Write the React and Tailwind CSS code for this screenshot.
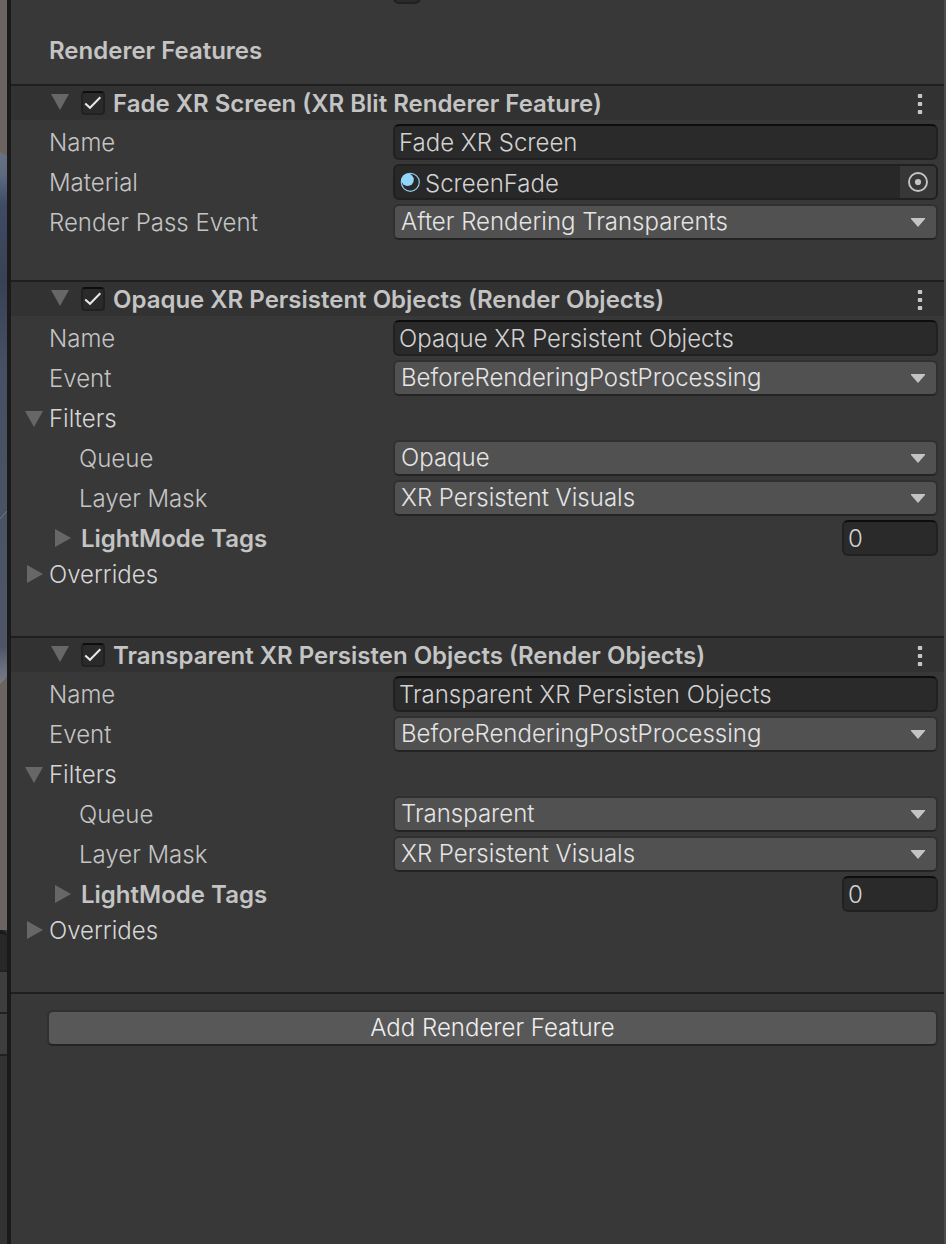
import { useState } from "react";

function Triangle({ open }) {
  return (
    <svg className="h-[18px] w-[18px] shrink-0 fill-[#676767]" viewBox="0 0 18 18" aria-hidden="true">
      {open ? <path d="M0 2H18L9 18Z" /> : <path d="M2 0V18L18 9Z" />}
    </svg>
  );
}

function Row({ label, id, indent, children }) {
  return (
    <div className="flex h-9 items-center">
      <label
        htmlFor={id}
        className={indent ? "w-[382px] shrink-0 pt-[2px] pl-[68px]" : "w-[382px] shrink-0 pt-[2px] pl-[38px]"}
      >
        {label}
      </label>
      {children}
    </div>
  );
}

const fieldClass =
  "h-9 rounded-md border-2 border-[#212121] border-t-[#0d0d0d] bg-[#2a2a2a] px-1 text-[#d2d2d2] outline-none";

function TextField({ label, id, value }) {
  return (
    <Row label={label} id={id}>
      <input id={id} type="text" defaultValue={value} className={`${fieldClass} min-w-0 flex-1`} />
    </Row>
  );
}

function SelectField({ label, id, value, indent }) {
  return (
    <Row label={label} id={id} indent={indent}>
      <div className="relative min-w-0 flex-1">
        <select
          id={id}
          defaultValue={value}
          className="block h-9 w-full appearance-none rounded-md border-2 border-[#303030] border-b-[#242424] bg-[#515151] pr-10 pl-[6px] text-[#e4e4e4] outline-none"
        >
          <option>{value}</option>
        </select>
        <svg
          className="pointer-events-none absolute top-[14px] right-[13px] h-[9px] w-[14px] fill-[#c4c4c4]"
          viewBox="0 0 14 9"
          aria-hidden="true"
        >
          <path d="M0 0H14V1L7 9L0 1Z" />
        </svg>
      </div>
    </Row>
  );
}

function MaterialField({ label, id, value }) {
  return (
    <Row label={label} id={id}>
      <div className="flex h-9 min-w-0 flex-1 items-center overflow-hidden rounded-md border-2 border-[#202020] bg-[#282828]">
        <svg className="ml-[5px] h-5 w-5 shrink-0" viewBox="0 0 20 20" aria-hidden="true">
          <circle cx="10.3" cy="10.3" r="9" fill="none" stroke="#8fcdf0" strokeWidth="1.2" />
          <circle cx="7.6" cy="7.8" r="6.2" fill="#93d6fb" />
        </svg>
        <input
          id={id}
          type="text"
          readOnly
          defaultValue={value}
          className="h-8 min-w-0 flex-1 bg-transparent pt-[2px] pl-[5px] text-[#d2d2d2] outline-none"
        />
        <button type="button" aria-label="Select material" className="flex h-8 w-9 items-center justify-center bg-[#373737]">
          <svg className="h-5 w-5" viewBox="0 0 20 20" aria-hidden="true">
            <circle cx="10" cy="10" r="9" fill="none" stroke="#c4c4c4" strokeWidth="1.9" />
            <circle cx="10" cy="10" r="3.1" fill="#c4c4c4" />
          </svg>
        </button>
      </div>
    </Row>
  );
}

function Feature({ id, title, children }) {
  const [open, setOpen] = useState(true);
  return (
    <section className="border-t-2 border-[#1f1f1f]">
      <header className="flex h-[34px] items-center bg-[#323232] pr-[19px] pl-10">
        <button type="button" aria-label="Toggle section" aria-expanded={open} onClick={() => setOpen(!open)} className="pb-1">
          <Triangle open={open} />
        </button>
        <span className="relative ml-3 h-6 w-6 shrink-0">
          <input
            id={`${id}-enabled`}
            type="checkbox"
            defaultChecked
            className="peer block h-6 w-6 appearance-none rounded border-2 border-[#212121] border-t-[#0d0d0d] bg-[#2a2a2a]"
          />
          <svg
            className="pointer-events-none absolute inset-0 hidden h-6 w-6 peer-checked:block"
            viewBox="0 0 24 24"
            aria-hidden="true"
          >
            <path d="M4.2 12.4L9 16.8L19.3 6.3" fill="none" stroke="#e8e8e8" strokeWidth="2" />
          </svg>
        </span>
        <label htmlFor={`${id}-enabled`} className="ml-2 flex-1 pt-[2px] font-semibold whitespace-nowrap">
          {title}
        </label>
        <button type="button" aria-label="Feature options" className="pt-[2px]">
          <svg className="h-5 w-[10px] fill-[#c4c4c4]" viewBox="0 0 10 20" aria-hidden="true">
            <path d="M3 0h4v4H3zM3 8h4v4H3zM3 16h4v4H3z" />
            <path d="M2 1h6v2H2zM2 9h6v2H2zM2 17h6v2H2z" opacity=".2" />
          </svg>
        </button>
      </header>
      {open && children}
    </section>
  );
}

function Foldout({ label, open, children }) {
  const [expanded, setExpanded] = useState(open);
  return (
    <>
      <button
        type="button"
        aria-expanded={expanded}
        onClick={() => setExpanded(!expanded)}
        className="flex h-9 items-center gap-[6px] pl-[14px] text-left text-[#d6d6d6]"
      >
        <Triangle open={expanded} />
        <span className="pt-[2px]">{label}</span>
      </button>
      {expanded && children}
    </>
  );
}

function RenderObjects({ id, title, name, queue }) {
  return (
    <Feature id={id} title={title}>
      <div className="flex flex-col gap-1 pt-1 pr-[6px]">
        <TextField id={`${id}-name`} label="Name" value={name} />
        <SelectField id={`${id}-event`} label="Event" value="BeforeRenderingPostProcessing" />
        <Foldout label="Filters" open>
          <SelectField id={`${id}-queue`} label="Queue" value={queue} indent />
          <SelectField id={`${id}-mask`} label="Layer Mask" value="XR Persistent Visuals" indent />
          <div className="flex h-9 items-center pl-[42px]">
            <button type="button" aria-label="Expand LightMode Tags">
              <Triangle open={false} />
            </button>
            <label htmlFor={`${id}-tags`} className="ml-[10px] flex-1 pt-[2px] font-semibold">
              LightMode Tags
            </label>
            <input id={`${id}-tags`} type="text" defaultValue="0" className={`${fieldClass} w-24`} />
          </div>
        </Foldout>
      </div>
      <div className="flex flex-col pb-11">
        <Foldout label="Overrides" open={false} />
      </div>
    </Feature>
  );
}

function SceneEdge() {
  return (
    <aside className="flex w-[7px] shrink-0 flex-col bg-[#333333]" aria-hidden="true">
      <svg className="h-[930px] w-[7px] shrink-0" viewBox="0 0 7 930">
        <defs>
          <linearGradient id="shape" x1="0" y1="152" x2="0" y2="684" gradientUnits="userSpaceOnUse">
            <stop offset="0" stopColor="#687184" />
            <stop offset=".04" stopColor="#5f6b80" />
            <stop offset=".1" stopColor="#3f4b62" />
            <stop offset=".24" stopColor="#384256" />
            <stop offset=".4" stopColor="#465062" />
            <stop offset=".93" stopColor="#4e5666" />
            <stop offset=".97" stopColor="#686f7d" />
            <stop offset="1" stopColor="#777a83" />
          </linearGradient>
        </defs>
        <path d="M0 0H7V930H0z" fill="#6b6460" />
        <path d="M0 152L7 156V677L0 684z" fill="url(#shape)" />
        <path d="M0 519L7 511" stroke="#707887" strokeWidth="1" />
      </svg>
      <div className="h-10 rounded-tr-md border-t-4 border-[#1a1a1a] bg-[#282828]" />
      <div className="h-[42px] border-t-2 border-[#222222] bg-[#3e3e3e]" />
      <div className="h-11 border-y-2 border-[#222222] bg-[#3e3e3e]" />
    </aside>
  );
}

export default function App() {
  return (
    <div className="flex min-h-screen bg-[#383838] font-['Inter',sans-serif] text-[24px] leading-[30px] font-light text-[#c4c4c4]">
      <SceneEdge />
      <main className="min-w-0 flex-1 border-r-2 border-l-4 border-r-[#4c4c4c] border-l-[#1a1a1a]">
        <div className="h-9 overflow-hidden pl-[382px]">
          <input
            type="checkbox"
            aria-label="Renderer option"
            className="-mt-6 block h-7 w-7 appearance-none rounded-md border-2 border-[#212121] bg-[#2a2a2a]"
          />
        </div>
        <h1 className="h-12 pl-[38px] font-semibold">Renderer Features</h1>

        <Feature id="fade" title="Fade XR Screen (XR Blit Renderer Feature)">
          <div className="flex flex-col gap-1 pt-1 pr-[6px] pb-10">
            <TextField id="fade-name" label="Name" value="Fade XR Screen" />
            <MaterialField id="fade-material" label="Material" value="ScreenFade" />
            <SelectField id="fade-event" label="Render Pass Event" value="After Rendering Transparents" />
          </div>
        </Feature>

        <RenderObjects
          id="opaque"
          title="Opaque XR Persistent Objects (Render Objects)"
          name="Opaque XR Persistent Objects"
          queue="Opaque"
        />
        <RenderObjects
          id="transparent"
          title="Transparent XR Persisten Objects (Render Objects)"
          name="Transparent XR Persisten Objects"
          queue="Transparent"
        />

        <div className="border-t-2 border-[#1f1f1f] pt-4 pr-[6px] pl-9">
          <button
            type="button"
            className="h-9 w-full rounded-md border-2 border-[#303030] border-b-[#242424] bg-[#585858] leading-8 text-[#eeeeee]"
          >
            Add Renderer Feature
          </button>
        </div>
      </main>
    </div>
  );
}
